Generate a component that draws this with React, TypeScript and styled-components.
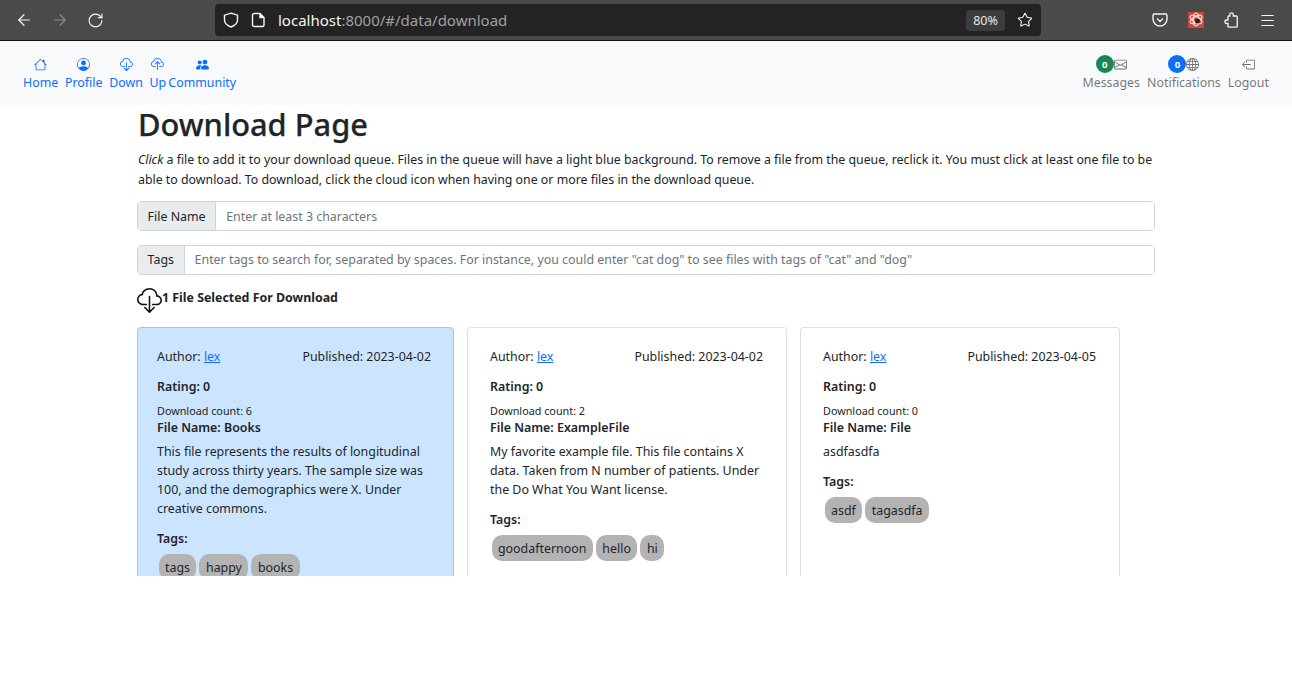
import React from 'react';
import styled, { createGlobalStyle } from 'styled-components';
import {
  BsHouse,
  BsPersonCircle,
  BsCloudDownload,
  BsCloudUpload,
  BsPeopleFill,
  BsEnvelope,
  BsGlobe,
  BsBoxArrowLeft,
} from 'react-icons/bs';
import { ArrowLeft, ArrowRight, RotateCw, Star, Menu } from 'lucide-react';

const FONT = '"Noto Sans", "Open Sans", sans-serif';

const GlobalStyle = createGlobalStyle`
  html, body { margin: 0; padding: 0; background: #fff; }
  body { font-family: ${FONT}; font-size: 12.4px; color: #212529; overflow: hidden; }
  * { box-sizing: border-box; }
`;

const Page = styled.div`
  width: 1292px;
  height: 697px;
  overflow: hidden;
`;

/* browser chrome */
const Chrome = styled.div`
  height: 41px;
  background: #4a4a4a;
  border-bottom: 1px solid #111;
  display: flex;
  align-items: center;
  padding: 0 16px 0 15px;
  color: #f5f5f5;
`;

const NavButtons = styled.div`
  width: 200px;
  display: flex;
  align-items: center;
  gap: 18px;
`;

const UrlBar = styled.div`
  width: 826px;
  height: 32px;
  background: #232323;
  border-radius: 4px;
  display: flex;
  align-items: center;
  padding: 0 8px 0 8px;
  gap: 12px;
`;

const UrlText = styled.div`
  flex: 1;
  font-size: 15px;
  color: #a0a0a0;
  white-space: nowrap;
  b { font-weight: 400; color: #f4f4f4; }
`;

const ZoomPill = styled.div`
  background: #3d3d3d;
  border-radius: 4px;
  width: 39px;
  height: 21px;
  font-size: 12.5px;
  color: #e6e6e6;
  display: flex;
  align-items: center;
  justify-content: center;
`;

const ChromeRight = styled.div`
  margin-left: auto;
  display: flex;
  align-items: center;
  gap: 20px;
`;

const ExtIcon = styled.div`
  width: 16px;
  height: 16px;
  background: #d2463a;
  display: flex;
  align-items: center;
  justify-content: center;
`;

/* app navbar */
const NavBar = styled.nav`
  height: 64px;
  background: #f8f9fa;
  display: flex;
  justify-content: space-between;
  padding: 14px 23px 0 23px;
`;

const NavGroup = styled.div<{ $gap: number }>`
  display: flex;
  align-items: flex-start;
  gap: ${(p) => p.$gap}px;
`;

const NavLink = styled.a<{ $muted?: boolean; $tight?: boolean }>`
  display: flex;
  flex-direction: column;
  align-items: center;
  color: ${(p) => (p.$muted ? 'rgba(0,0,0,0.55)' : '#0d6efd')};
  line-height: 19px;
  white-space: nowrap;
  margin-left: ${(p) => (p.$tight ? -4.6 : 0)}px;
`;

const NavIcon = styled.div`
  height: 18px;
  display: flex;
  align-items: center;
  justify-content: center;
  font-size: 13px;
`;

const CountBadge = styled.span<{ $bg: string }>`
  width: 18px;
  height: 18px;
  border-radius: 50%;
  background: ${(p) => p.$bg};
  color: #fff;
  font-size: 9.6px;
  font-weight: 700;
  display: flex;
  align-items: center;
  justify-content: center;
`;

/* page */
const Main = styled.main`
  width: 1018px;
  margin: 0 auto;
`;

const Title = styled.h1`
  margin: 0;
  font-size: 30.8px;
  font-weight: 500;
  -webkit-text-stroke: 0.25px #212529;
  line-height: 38px;
  padding-left: 1px;
`;

const Intro = styled.p`
  margin: 7px 0 12px 1px;
  font-size: 12.35px;
  line-height: 19.5px;
  width: 1017px;
`;

const InputGroup = styled.div`
  display: flex;
  height: 30px;
  margin-bottom: 13.6px;
  border: 1px solid #ced4da;
  border-radius: 4px;
  overflow: hidden;
`;

const InputLabel = styled.div`
  background: #e9ecef;
  border-right: 1px solid #ced4da;
  padding: 0 9.6px;
  display: flex;
  align-items: center;
  white-space: nowrap;
`;

const InputHint = styled.div`
  flex: 1;
  background: #fff;
  padding: 0 10px;
  display: flex;
  align-items: center;
  color: #6c757d;
  white-space: nowrap;
`;

const SelectedRow = styled.div`
  display: flex;
  align-items: flex-start;
  height: 24px;
  margin: -0.2px 0 15px;
  font-weight: 700;
  line-height: 19px;
`;

const CardList = styled.div`
  display: flex;
  gap: 13px;
  height: 249px;
  overflow: hidden;
  align-items: flex-start;
`;

const Card = styled.article<{ $selected?: boolean }>`
  width: ${(p) => (p.$selected ? 317 : 320)}px;
  height: 280px;
  flex: none;
  background: ${(p) => (p.$selected ? '#cce5ff' : '#fff')};
  border: 1px solid ${(p) => (p.$selected ? '#9ec5fe' : 'rgba(0,0,0,0.125)')};
  border-radius: 4px;
  padding: 19px ${(p) => (p.$selected ? 22 : 23)}px 0 ${(p) => (p.$selected ? 19 : 22)}px;
`;

const CardHead = styled.div`
  display: flex;
  justify-content: space-between;
  line-height: 19px;
  margin-bottom: 11px;
  a { color: #0d6efd; text-decoration: underline; }
`;

const Rating = styled.div`
  font-weight: 600;
  line-height: 19px;
  margin-bottom: 7px;
`;

const Count = styled.div`
  font-size: 10.8px;
  line-height: 16px;
`;

const FileName = styled.div`
  font-weight: 600;
  line-height: 17px;
  margin-bottom: 6px;
`;

const Description = styled.p`
  margin: 0 0 11px;
  line-height: 19px;
`;

const TagsLabel = styled.div`
  font-weight: 600;
  line-height: 19px;
  margin-bottom: 6px;
`;

const Tags = styled.div`
  display: flex;
  gap: 3px;
  padding-left: 1.5px;
`;

const Tag = styled.span`
  background: #b3b3b3;
  border-radius: 10px;
  height: 26px;
  padding: 0 6.5px;
  display: flex;
  align-items: center;
`;

const cards = [
  {
    author: 'lex',
    date: '2023-04-02',
    count: 6,
    name: 'Books',
    selected: true,
    text: 'This file represents the results of longitudinal study across thirty years. The sample size was 100, and the demographics were X. Under creative commons.',
    tags: ['tags', 'happy', 'books'],
  },
  {
    author: 'lex',
    date: '2023-04-02',
    count: 2,
    name: 'ExampleFile',
    text: 'My favorite example file. This file contains X data. Taken from N number of patients. Under the Do What You Want license.',
    tags: ['goodafternoon', 'hello', 'hi'],
  },
  {
    author: 'lex',
    date: '2023-04-05',
    count: 0,
    name: 'File',
    text: 'asdfasdfa',
    tags: ['asdf', 'tagasdfa'],
  },
];

export default function App() {
  return (
    <Page>
      <GlobalStyle />
      <Chrome>
        <NavButtons>
          <ArrowLeft size={18} strokeWidth={1.6} />
          <ArrowRight size={18} strokeWidth={1.6} color="#8a8a8a" />
          <RotateCw size={17} strokeWidth={1.6} />
        </NavButtons>
        <UrlBar>
          <svg width="16" height="16" viewBox="0 0 16 16" fill="none" stroke="#f5f5f5" strokeWidth="1.4">
            <path d="M8 1.200L14.500 3.200V8c0 3.500-3.200 5.800-6.500 7-3.300-1.200-6.500-3.500-6.500-7V3.200z" />
          </svg>
          <svg width="15" height="16" viewBox="0 0 15 16" fill="none" stroke="#f5f5f5" strokeWidth="1.4">
            <path d="M3 1.500h6l4 4V13a1.500 1.500 0 0 1-1.500 1.500h-8.500A1.500 1.500 0 0 1 1.500 13V3A1.500 1.500 0 0 1 3 1.500z" />
            <path d="M9 1.500v4h4" fill="#f5f5f5" />
          </svg>
          <UrlText>
            <b>localhost</b>:8000/#/data/download
          </UrlText>
          <ZoomPill>80%</ZoomPill>
          <Star size={16} strokeWidth={1.6} />
        </UrlBar>
        <ChromeRight>
          <svg width="16" height="16" viewBox="0 0 16 16" fill="none" stroke="#f5f5f5" strokeWidth="1.4">
            <path d="M2.500 2h11a1.500 1.500 0 0 1 1.500 1.500V7a7 7 0 0 1-14 0V3.500A1.500 1.500 0 0 1 2.500 2z" />
            <path d="M5 6.500l3 3 3-3" />
          </svg>
          <ExtIcon>
            <svg width="16" height="16" viewBox="0 0 16 16" fill="none" stroke="#f6dcd8" strokeWidth="1.3">
              <ellipse cx="8" cy="7.500" rx="6.500" ry="2.800" transform="rotate(30 8 7.500)" />
              <ellipse cx="8" cy="7.500" rx="6.500" ry="2.800" transform="rotate(-30 8 7.500)" />
              <ellipse cx="8" cy="7.500" rx="2.800" ry="6.300" />
              <circle cx="9.500" cy="9" r="2.500" fill="#2a2322" stroke="none" />
            </svg>
          </ExtIcon>
          <svg width="15" height="16" viewBox="0 0 17 18" fill="none" stroke="#f5f5f5" strokeWidth="1.500">
            <path d="M6.500 4.500V3a2 2 0 0 1 4 0v1.500h3.500a1 1 0 0 1 1 1V16a1 1 0 0 1-1 1H5.500a1 1 0 0 1-1-1v-3H3a2 2 0 0 1 0-4h1.500V5.500a1 1 0 0 1 1-1z" />
          </svg>
          <Menu size={17} strokeWidth={1.5} />
        </ChromeRight>
      </Chrome>

      <NavBar>
        <NavGroup $gap={6.7}>
          <NavLink>
            <NavIcon><BsHouse /></NavIcon>Home
          </NavLink>
          <NavLink>
            <NavIcon><BsPersonCircle /></NavIcon>Profile
          </NavLink>
          <NavLink>
            <NavIcon><BsCloudDownload /></NavIcon>Down
          </NavLink>
          <NavLink>
            <NavIcon><BsCloudUpload /></NavIcon>Up
          </NavLink>
          <NavLink $tight>
            <NavIcon><BsPeopleFill /></NavIcon>Community
          </NavLink>
        </NavGroup>
        <NavGroup $gap={7}>
          <NavLink $muted>
            <NavIcon><CountBadge $bg="#198754">0</CountBadge><BsEnvelope /></NavIcon>Messages
          </NavLink>
          <NavLink $muted>
            <NavIcon><CountBadge $bg="#0d6efd">0</CountBadge><BsGlobe /></NavIcon>Notifications
          </NavLink>
          <NavLink $muted>
            <NavIcon><BsBoxArrowLeft /></NavIcon>Logout
          </NavLink>
        </NavGroup>
      </NavBar>

      <Main>
        <Title>Download Page</Title>
        <Intro>
          <em>Click</em> a file to add it to your download queue. Files in the queue will have a light blue background. To remove a file from the queue, reclick it. You must click at least one file to be able to download. To download, click the cloud icon when having one or more files in the download queue.
        </Intro>
        <InputGroup>
          <InputLabel>File Name</InputLabel>
          <InputHint>Enter at least 3 characters</InputHint>
        </InputGroup>
        <InputGroup>
          <InputLabel>Tags</InputLabel>
          <InputHint>Enter tags to search for, separated by spaces. For instance, you could enter "cat dog" to see files with tags of "cat" and "dog"</InputHint>
        </InputGroup>
        <SelectedRow>
          <BsCloudDownload size={25} color="#111" />
          1 File Selected For Download
        </SelectedRow>
        <CardList>
          {cards.map((c) => (
            <Card key={c.name} $selected={c.selected}>
              <CardHead>
                <span>Author: <a>{c.author}</a></span>
                <span>Published: {c.date}</span>
              </CardHead>
              <Rating>Rating: 0</Rating>
              <Count>Download count: {c.count}</Count>
              <FileName>File Name: {c.name}</FileName>
              <Description>{c.text}</Description>
              <TagsLabel>Tags:</TagsLabel>
              <Tags>
                {c.tags.map((t) => <Tag key={t}>{t}</Tag>)}
              </Tags>
            </Card>
          ))}
        </CardList>
      </Main>
    </Page>
  );
}
